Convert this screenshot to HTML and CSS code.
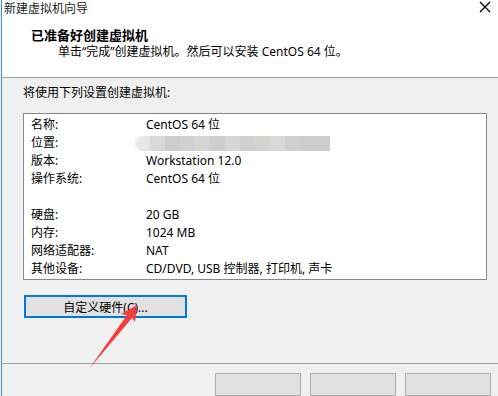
FILE: index.html
```html
<!DOCTYPE html>
<html lang="zh-CN">
<head>
    <meta charset="UTF-8">
    <meta name="viewport" content="width=device-width, initial-scale=1.0">
    <title>新建虚拟机向导</title>
    <link rel="stylesheet" href="styles.css">
</head>
<body>
    <div class="window">
        <div class="top">
            <div class="titlebar">
                <span class="title">新建虚拟机向导</span>
                <svg class="win-x" width="12" height="12" viewBox="0 0 12 12" xmlns="http://www.w3.org/2000/svg">
                    <path d="M1 1 L11 11 M11 1 L1 11" stroke="#000000" stroke-width="1.3" fill="none"/>
                </svg>
            </div>
            <div class="header">
                <h1>已准备好创建虚拟机</h1>
                <p>单击“完成”创建虚拟机。然后可以安装 CentOS 64 位。</p>
            </div>
        </div>

        <div class="content">
            <p class="intro">将使用下列设置创建虚拟机:</p>
            <div class="summary">
                <div class="row"><span class="key">名称:</span><span class="val">CentOS 64 位</span></div>
                <div class="row"><span class="key">位置:</span><span class="val"><span class="blur"></span></span></div>
                <div class="row"><span class="key">版本:</span><span class="val">Workstation 12.0</span></div>
                <div class="row"><span class="key">操作系统:</span><span class="val">CentOS 64 位</span></div>
                <div class="row"></div>
                <div class="row"><span class="key">硬盘:</span><span class="val">20 GB</span></div>
                <div class="row"><span class="key">内存:</span><span class="val">1024 MB</span></div>
                <div class="row"><span class="key">网络适配器:</span><span class="val">NAT</span></div>
                <div class="row"><span class="key">其他设备:</span><span class="val">CD/DVD, USB 控制器, 打印机, 声卡</span></div>
            </div>
            <button type="button" class="custom">自定义硬件(C)...</button>
        </div>

        <div class="footer">
            <button type="button" class="btn"></button>
            <button type="button" class="btn"></button>
            <button type="button" class="btn"></button>
        </div>
    </div>

    <!-- 红色箭头标注 -->
    <svg class="arrow" width="498" height="396" viewBox="0 0 498 396">
        <polygon points="137,305 121,314 127,315 89,369 132,318 135,322" fill="#f43d3a"/>
    </svg>
</body>
</html>
```

FILE: styles.css
```css
body {
    font-family: "Noto Sans", "Noto Sans CJK SC", sans-serif;
    font-size: 12px;
    color: #000;
    background-color: #f0f0f0;
    margin: 0;
    padding: 0 0 0 1px;
    width: 498px;
    height: 396px;
    overflow: hidden;
    box-sizing: border-box;
}
.window {
    border-left: 1px solid #4a8cd2;
    height: 396px;
    display: flex;
    flex-direction: column;
}
.top {
    background-color: #fff;
    border-bottom: 1px solid #a0a0a0;
}
.titlebar {
    position: relative;
    height: 16px;
    padding: 0 0 0 2px;
}
.title {
    line-height: 16px;
    color: #222;
}
.win-x {
    position: absolute;
    top: 1px;
    right: 7px;
    z-index: 5;
}
.header {
    padding: 11px 0 17px 29px;
}
h1 {
    font-size: 13px;
    font-weight: bold;
    line-height: 16px;
    margin: 0;
}
.header p {
    margin: 1px 0 0 27px;
    line-height: 16px;
}
.content {
    padding: 7px 11px 0 21px;
    height: 303px;
    box-sizing: border-box;
}
.intro {
    margin: 0 0 12px 0;
    line-height: 16px;
}
.summary {
    background-color: #fff;
    border: 1px solid #828790;
    padding: 2px 0 1px 7px;
}
.row {
    display: flex;
    height: 18px;
    line-height: 18px;
}
.key {
    width: 115px;
    flex-shrink: 0;
}
.blur {
    display: inline-block;
    vertical-align: middle;
    margin-left: -11px;
    margin-top: -1px;
    width: 195px;
    height: 15px;
    border-radius: 8px 0 0 8px;
    background: linear-gradient(to right,
        #ececec 0, #e4e4e4 15px,
        #d8d8d8 15px, #d8d8d8 30px,
        #cccccc 30px, #cccccc 45px,
        #d1d1d1 45px, #d1d1d1 60px,
        #d5d5d5 60px, #d5d5d5 75px,
        #cecece 75px, #cecece 90px,
        #d6d6d6 90px, #d6d6d6 105px,
        #d0d0d0 105px, #d0d0d0 120px,
        #d5d3d0 120px, #d5d3d0 135px,
        #d9d9d9 135px, #d9d9d9 150px,
        #cfcfcf 150px, #cfcfcf 165px,
        #cdcdcd 165px, #cdcdcd 195px);
}
.custom {
    display: block;
    margin: 15px 0 0 1px;
    width: 163px;
    height: 23px;
    border: 2px solid #0078d7;
    background-color: #e1e1e1;
    font-family: "Noto Sans", "Noto Sans CJK SC", sans-serif;
    font-size: 12px;
    color: #000;
    padding: 0;
}
.footer {
    border-top: 1px solid #a0a0a0;
    display: flex;
    justify-content: flex-end;
    gap: 9px;
    padding: 9px 7px 0 0;
}
.btn {
    width: 86px;
    height: 23px;
    border: 1px solid #adadad;
    background-color: #e1e1e1;
    padding: 0;
}
.arrow {
    position: absolute;
    left: 0;
    top: 0;
    pointer-events: none;
}
```
